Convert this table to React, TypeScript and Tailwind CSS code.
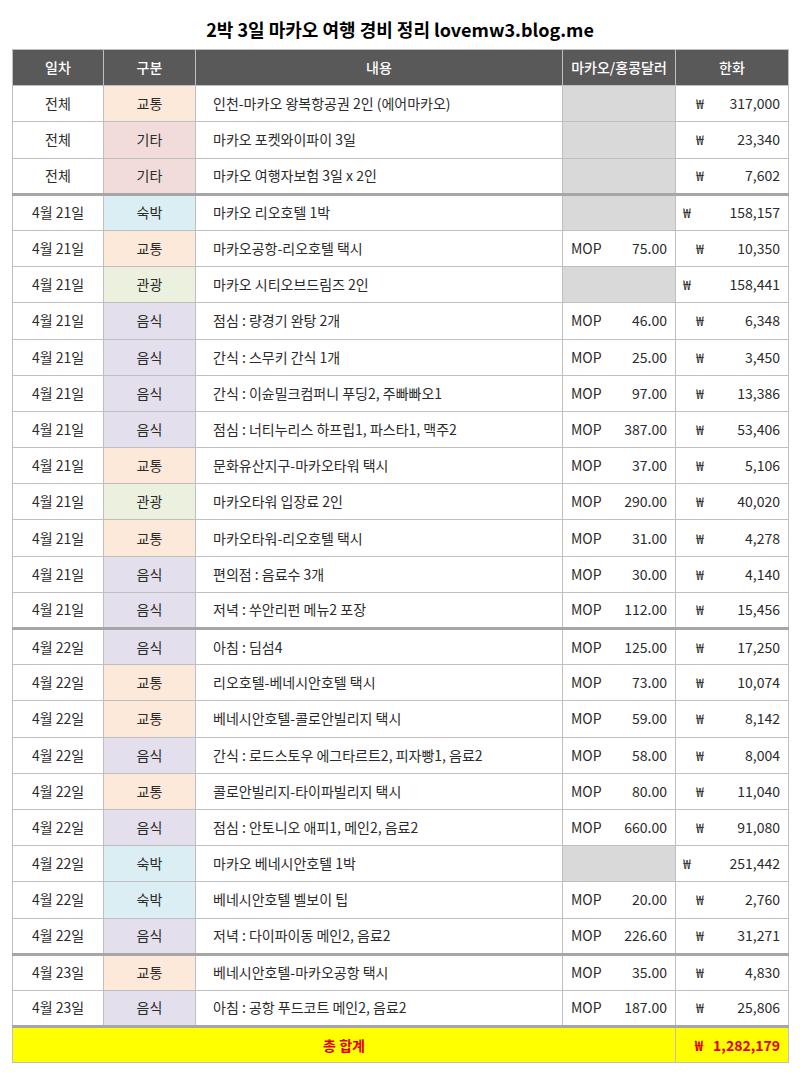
import React from "react";

type Row = {
  day: string;
  cat: string;
  desc: string;
  mop?: string;
  krw: string;
  wonLeft?: boolean;
  sep?: boolean;
};

const CAT_BG: Record<string, string> = {
  교통: "bg-[#fde9d9]",
  기타: "bg-[#f2dcdb]",
  숙박: "bg-[#daeef3]",
  관광: "bg-[#ebf1de]",
  음식: "bg-[#e4dfec]",
};

const rows: Row[] = [
  { day: "전체", cat: "교통", desc: "인천-마카오 왕복항공권 2인 (에어마카오)", krw: "317,000" },
  { day: "전체", cat: "기타", desc: "마카오 포켓와이파이 3일", krw: "23,340" },
  { day: "전체", cat: "기타", desc: "마카오 여행자보험 3일 x 2인", krw: "7,602" },
  { day: "4월 21일", cat: "숙박", desc: "마카오 리오호텔 1박", krw: "158,157", wonLeft: true, sep: true },
  { day: "4월 21일", cat: "교통", desc: "마카오공항-리오호텔 택시", mop: "75.00", krw: "10,350" },
  { day: "4월 21일", cat: "관광", desc: "마카오 시티오브드림즈 2인", krw: "158,441", wonLeft: true },
  { day: "4월 21일", cat: "음식", desc: "점심 : 량경기 완탕 2개", mop: "46.00", krw: "6,348" },
  { day: "4월 21일", cat: "음식", desc: "간식 : 스무키 간식 1개", mop: "25.00", krw: "3,450" },
  { day: "4월 21일", cat: "음식", desc: "간식 : 이슌밀크컴퍼니 푸딩2, 주빠빠오1", mop: "97.00", krw: "13,386" },
  { day: "4월 21일", cat: "음식", desc: "점심 : 너티누리스 하프립1, 파스타1, 맥주2", mop: "387.00", krw: "53,406" },
  { day: "4월 21일", cat: "교통", desc: "문화유산지구-마카오타워 택시", mop: "37.00", krw: "5,106" },
  { day: "4월 21일", cat: "관광", desc: "마카오타워 입장료 2인", mop: "290.00", krw: "40,020" },
  { day: "4월 21일", cat: "교통", desc: "마카오타워-리오호텔 택시", mop: "31.00", krw: "4,278" },
  { day: "4월 21일", cat: "음식", desc: "편의점 : 음료수 3개", mop: "30.00", krw: "4,140" },
  { day: "4월 21일", cat: "음식", desc: "저녁 : 쑤안리펀 메뉴2 포장", mop: "112.00", krw: "15,456" },
  { day: "4월 22일", cat: "음식", desc: "아침 : 딤섬4", mop: "125.00", krw: "17,250", sep: true },
  { day: "4월 22일", cat: "교통", desc: "리오호텔-베네시안호텔 택시", mop: "73.00", krw: "10,074" },
  { day: "4월 22일", cat: "교통", desc: "베네시안호텔-콜로안빌리지 택시", mop: "59.00", krw: "8,142" },
  { day: "4월 22일", cat: "음식", desc: "간식 : 로드스토우 에그타르트2, 피자빵1, 음료2", mop: "58.00", krw: "8,004" },
  { day: "4월 22일", cat: "교통", desc: "콜로안빌리지-타이파빌리지 택시", mop: "80.00", krw: "11,040" },
  { day: "4월 22일", cat: "음식", desc: "점심 : 안토니오 애피1, 메인2, 음료2", mop: "660.00", krw: "91,080" },
  { day: "4월 22일", cat: "숙박", desc: "마카오 베네시안호텔 1박", krw: "251,442", wonLeft: true },
  { day: "4월 22일", cat: "숙박", desc: "베네시안호텔 벨보이 팁", mop: "20.00", krw: "2,760" },
  { day: "4월 22일", cat: "음식", desc: "저녁 : 다이파이동 메인2, 음료2", mop: "226.60", krw: "31,271" },
  { day: "4월 23일", cat: "교통", desc: "베네시안호텔-마카오공항 택시", mop: "35.00", krw: "4,830", sep: true },
  { day: "4월 23일", cat: "음식", desc: "아침 : 공항 푸드코트 메인2, 음료2", mop: "187.00", krw: "25,806" },
];

const font = "font-['Noto_Sans_CJK_KR','Noto_Sans',sans-serif]";

export default function App() {
  return (
    <div className={`w-[800px] bg-white pt-[16px] text-[14px] text-[#2b2b2b] ${font}`}>
      <h1 className="mb-[7px] text-center text-[18px] font-bold leading-[26px] text-black">
        2박 3일 마카오 여행 경비 정리 lovemw3.blog.me
      </h1>
      <table className="mx-[12px] w-[776px] table-fixed border-collapse border border-[#bfbfbf]">
        <colgroup>
          <col className="w-[91px]" />
          <col className="w-[92px]" />
          <col className="w-[367px]" />
          <col className="w-[113px]" />
          <col className="w-[113px]" />
        </colgroup>
        <thead>
          <tr className="h-[36.2px] bg-[#595959] text-white">
            {["일차", "구분", "내용", "마카오/홍콩달러", "한화"].map((h) => (
              <th key={h} className="border border-[#bfbfbf] p-0 text-center font-medium">
                {h}
              </th>
            ))}
          </tr>
        </thead>
        <tbody>
          {rows.map((r, i) => {
            const top = r.sep ? "border-t-[3px] border-t-[#a6a6a6]" : "";
            return (
              <tr key={i} className="h-[36.2px]">
                <td className={`border border-[#bfbfbf] p-0 text-center ${top}`}>{r.day}</td>
                <td className={`border border-[#bfbfbf] p-0 text-center ${CAT_BG[r.cat]} ${top}`}>{r.cat}</td>
                <td className={`border border-[#bfbfbf] py-0 pl-[17px] pr-2 ${top}`}>{r.desc}</td>
                {r.mop ? (
                  <td className={`border border-[#bfbfbf] p-0 ${top}`}>
                    <div className="flex justify-between pl-[8px] pr-[8px]">
                      <span>MOP</span>
                      <span>{r.mop}</span>
                    </div>
                  </td>
                ) : (
                  <td className={`border border-[#bfbfbf] bg-[#d9d9d9] p-0 ${top}`} />
                )}
                <td className={`border border-[#bfbfbf] p-0 ${top}`}>
                  <div className={`flex justify-between pr-[8px] ${r.wonLeft ? "pl-[7px]" : "pl-[20px]"}`}>
                    <span>₩</span>
                    <span>{r.krw}</span>
                  </div>
                </td>
              </tr>
            );
          })}
          <tr className="h-[36.2px] bg-[#ffff00] font-bold text-[#e00000]">
            <td colSpan={4} className="border border-t-[3px] border-[#bfbfbf] border-t-[#a6a6a6] p-0 text-center">
              총 합계
            </td>
            <td className="border border-t-[3px] border-[#bfbfbf] border-t-[#a6a6a6] p-0">
              <div className="flex justify-end gap-[10px] pr-[8px]">
                <span>₩</span>
                <span>1,282,179</span>
              </div>
            </td>
          </tr>
        </tbody>
      </table>
    </div>
  );
}
